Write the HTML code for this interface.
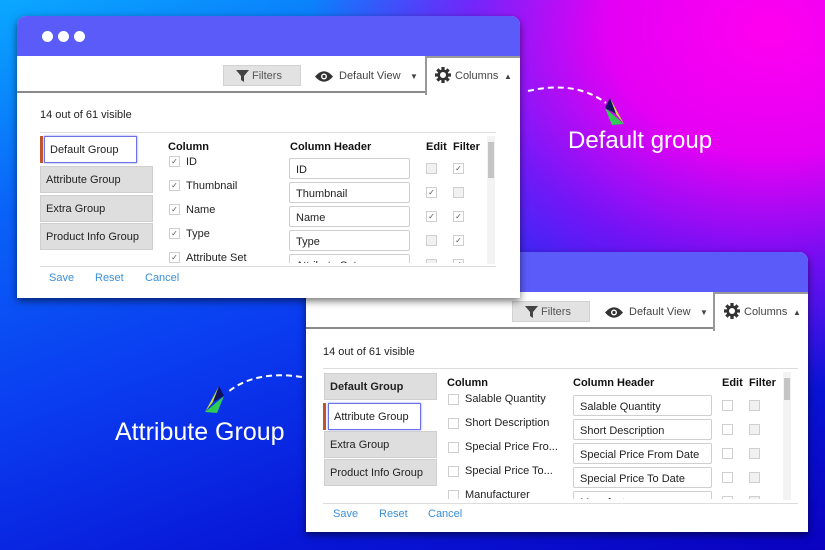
<!DOCTYPE html>
<html><head><meta charset="utf-8"><style>
*{margin:0;padding:0;box-sizing:border-box}
body{width:825px;height:550px;overflow:hidden;position:relative;font-family:"Liberation Sans",sans-serif;
background:
radial-gradient(ellipse 460px 360px at 770px 30px,#ff00f0 0%,#e400f4 35%,rgba(170,0,250,.65) 65%,rgba(120,0,255,0) 100%),
linear-gradient(160deg,#0aa8ff 0%,#0a62f8 25%,#0a3cf0 50%,#0818d8 75%,#0a02c0 100%);}
.abs{position:absolute}
.win{position:absolute;background:#fff;border-radius:9px 9px 0 0;box-shadow:0 3px 8px rgba(0,0,0,.55);overflow:hidden}
.hdr{position:absolute;left:0;top:0;right:0;height:40px;background:#5b5bfa}
.dot{position:absolute;top:15px;width:11px;height:11px;border-radius:50%;background:#fff}
.tb{position:absolute;left:0;right:0;top:40px;height:37px;background:#fff;border-bottom:2px solid #8a8a8a}
.tab{position:absolute;top:40px;right:0;height:39px;background:#fff;border-left:2px solid #999;border-top:2px solid #999}
.btn{position:absolute;height:21px;background:#e2e2e2;border:1px solid #d2d2d2;font-size:11px;color:#555;line-height:20px}
.t{position:absolute;font-size:11px;line-height:16px;color:#222;white-space:nowrap}
.b{font-weight:bold;color:#111}
.grp{position:absolute;height:27px;background:#dedede;border:1px solid #cfcfcf;font-size:11px;color:#222;line-height:26px;padding-left:5px;white-space:nowrap}
.sel{background:#fff;border:1px solid #6b72e6;box-shadow:0 0 2px #8a8ff0}
.bar{position:absolute;width:3px;background:#c0532a}
.cb{position:absolute;width:11px;height:11px;border:1px solid #cfcfcf;background:#fff;font-size:8px;line-height:9px;text-align:center;color:#555}
.cbf{background:#f1f1f1}
.inp{position:absolute;height:21px;border:1px solid #cfcfcf;border-radius:2px;font-size:11px;line-height:20px;padding-left:6px;padding-top:1px;color:#222;background:#fff;white-space:nowrap;overflow:hidden}
.clip{position:absolute;overflow:hidden}
.lnk{position:absolute;font-size:11px;line-height:16px;color:#3a8fd9}
.ann{position:absolute;color:#fff;font-size:24px;white-space:nowrap}
</style></head><body>

<svg class="abs" style="left:0;top:0" width="825" height="550">
<path d="M528 91 Q575 80 606 103" fill="none" stroke="#fff" stroke-width="2" stroke-dasharray="6 4"/>
<path d="M302 377 Q255 370 228 392" fill="none" stroke="#fff" stroke-width="2" stroke-dasharray="6 4"/>
<g transform="translate(614,112)"><path d="M-9 -4 L10 12 L-2 13 Z" fill="#2ecc55"/><path d="M-4 -14 L10 12 L2 2 Z" fill="#c7dc3a"/><path d="M-9 -4 L2 2 L-4 -14 Z" fill="#101060"/></g>
<g transform="translate(215,400) scale(-1,1)"><path d="M-9 -4 L10 12 L-2 13 Z" fill="#2ecc55"/><path d="M-4 -14 L10 12 L2 2 Z" fill="#c7dc3a"/><path d="M-9 -4 L2 2 L-4 -14 Z" fill="#101060"/></g>
</svg>
<div class="ann" style="left:568px;top:127px">Default group</div>
<div class="ann" style="left:115px;top:418px;font-size:25px">Attribute Group</div>

<!-- Window 2 -->
<div class="win" style="left:306px;top:252px;width:502px;height:280px">
<div class="hdr"></div>
<div class="tb"></div>
<div class="btn" style="left:206px;top:49px;width:78px;padding-left:28px"><svg class="abs" style="left:12px;top:4px" width="13" height="12"><path d="M0 0H13L8 6V12L5 10V6Z" fill="#444"/></svg>Filters</div>
<svg class="abs" style="left:299px;top:55px" width="18" height="11"><path d="M0 5.5Q9 -5 18 5.5Q9 16 0 5.5Z" fill="#333"/><circle cx="9" cy="5.5" r="3" fill="#fff"/><circle cx="9" cy="5.5" r="1.6" fill="#333"/></svg>
<div class="t" style="left:323px;top:52px;color:#444">Default View</div>
<div class="t" style="left:394px;top:53px;font-size:8px;color:#444">▼</div>
<div class="tab" style="left:407px"></div>
<svg class="abs" style="left:418px;top:51px" width="16" height="16" viewBox="-8 -8 16 16"><g fill="#333"><circle r="5.5"/><rect x="-1.6" y="-8" width="3.2" height="16"/><rect x="-1.6" y="-8" width="3.2" height="16" transform="rotate(45)"/><rect x="-1.6" y="-8" width="3.2" height="16" transform="rotate(90)"/><rect x="-1.6" y="-8" width="3.2" height="16" transform="rotate(135)"/></g><circle r="3" fill="#fff"/></svg>
<div class="t" style="left:438px;top:52px;color:#444">Columns</div>
<div class="t" style="left:487px;top:53px;font-size:8px;color:#444">▲</div>
<div class="t" style="left:17px;top:92px">14 out of 61 visible</div>
<div class="abs" style="left:17px;top:116px;width:475px;height:1px;background:#ddd"></div>
<div class="grp" style="left:18px;top:121px;width:113px" ><b style="font-weight:bold">Default Group</b></div>
<div class="bar" style="left:17px;top:151px;height:27px"></div>
<div class="grp sel" style="left:22px;top:151px;width:93px">Attribute Group</div>
<div class="grp" style="left:18px;top:179px;width:113px">Extra Group</div>
<div class="grp" style="left:18px;top:207px;width:113px">Product Info Group</div>
<div class="clip" style="left:130px;top:118px;width:350px;height:129px">
<div class="t b" style="left:11px;top:5px">Column</div>
<div class="t b" style="left:137px;top:5px">Column Header</div>
<div class="t b" style="left:286px;top:5px">Edit</div>
<div class="t b" style="left:313px;top:5px">Filter</div>
<div class="cb" style="left:12px;top:24px"></div><div class="t" style="left:29px;top:21px">Salable Quantity</div>
<div class="cb" style="left:12px;top:48px"></div><div class="t" style="left:29px;top:45px">Short Description</div>
<div class="cb" style="left:12px;top:72px"></div><div class="t" style="left:29px;top:69px">Special Price Fro...</div>
<div class="cb" style="left:12px;top:96px"></div><div class="t" style="left:29px;top:93px">Special Price To...</div>
<div class="cb" style="left:12px;top:120px"></div><div class="t" style="left:29px;top:117px">Manufacturer</div>
<div class="inp" style="left:137px;top:25px;width:139px">Salable Quantity</div>
<div class="inp" style="left:137px;top:49px;width:139px">Short Description</div>
<div class="inp" style="left:137px;top:73px;width:139px">Special Price From Date</div>
<div class="inp" style="left:137px;top:97px;width:139px">Special Price To Date</div>
<div class="inp" style="left:137px;top:121px;width:139px">Manufacturer</div>
<div class="cb" style="left:286px;top:30px"></div><div class="cb cbf" style="left:313px;top:30px"></div>
<div class="cb" style="left:286px;top:54px"></div><div class="cb cbf" style="left:313px;top:54px"></div>
<div class="cb" style="left:286px;top:78px"></div><div class="cb cbf" style="left:313px;top:78px"></div>
<div class="cb" style="left:286px;top:102px"></div><div class="cb cbf" style="left:313px;top:102px"></div>
<div class="cb" style="left:286px;top:126px"></div><div class="cb cbf" style="left:313px;top:126px"></div>
</div>
<div class="abs" style="left:477px;top:120px;width:8px;height:128px;background:#f3f3f3"></div>
<div class="abs" style="left:478px;top:126px;width:6px;height:22px;background:#c4c4c4"></div>
<div class="abs" style="left:17px;top:251px;width:475px;height:1px;background:#ddd"></div>
<div class="lnk" style="left:27px;top:254px">Save</div>
<div class="lnk" style="left:73px;top:254px">Reset</div>
<div class="lnk" style="left:122px;top:254px">Cancel</div>
</div>

<!-- Window 1 -->
<div class="win" style="left:17px;top:16px;width:503px;height:282px">
<div class="hdr"></div>
<div class="dot" style="left:25px"></div><div class="dot" style="left:41px"></div><div class="dot" style="left:57px"></div>
<div class="tb"></div>
<div class="btn" style="left:206px;top:49px;width:78px;padding-left:28px"><svg class="abs" style="left:12px;top:4px" width="13" height="12"><path d="M0 0H13L8 6V12L5 10V6Z" fill="#444"/></svg>Filters</div>
<svg class="abs" style="left:298px;top:55px" width="18" height="11"><path d="M0 5.5Q9 -5 18 5.5Q9 16 0 5.5Z" fill="#333"/><circle cx="9" cy="5.5" r="3" fill="#fff"/><circle cx="9" cy="5.5" r="1.6" fill="#333"/></svg>
<div class="t" style="left:322px;top:52px;color:#444">Default View</div>
<div class="t" style="left:393px;top:53px;font-size:8px;color:#444">▼</div>
<div class="tab" style="left:408px"></div>
<svg class="abs" style="left:418px;top:51px" width="16" height="16" viewBox="-8 -8 16 16"><g fill="#333"><circle r="5.5"/><rect x="-1.6" y="-8" width="3.2" height="16"/><rect x="-1.6" y="-8" width="3.2" height="16" transform="rotate(45)"/><rect x="-1.6" y="-8" width="3.2" height="16" transform="rotate(90)"/><rect x="-1.6" y="-8" width="3.2" height="16" transform="rotate(135)"/></g><circle r="3" fill="#fff"/></svg>
<div class="t" style="left:438px;top:52px;color:#444">Columns</div>
<div class="t" style="left:487px;top:53px;font-size:8px;color:#444">▲</div>
<div class="t" style="left:23px;top:91px">14 out of 61 visible</div>
<div class="abs" style="left:23px;top:116px;width:456px;height:1px;background:#ddd"></div>
<div class="bar" style="left:23px;top:120px;height:27px"></div>
<div class="grp sel" style="left:27px;top:120px;width:93px">Default Group</div>
<div class="grp" style="left:23px;top:150px;width:113px">Attribute Group</div>
<div class="grp" style="left:23px;top:179px;width:113px">Extra Group</div>
<div class="grp" style="left:23px;top:207px;width:113px">Product Info Group</div>
<div class="clip" style="left:140px;top:118px;width:330px;height:129px">
<div class="t b" style="left:11px;top:5px">Column</div>
<div class="t b" style="left:133px;top:5px">Column Header</div>
<div class="t b" style="left:269px;top:5px">Edit</div>
<div class="t b" style="left:296px;top:5px">Filter</div>
<div class="cb" style="left:12px;top:22px">✓</div><div class="t" style="left:29px;top:20px">ID</div>
<div class="cb" style="left:12px;top:46px">✓</div><div class="t" style="left:29px;top:44px">Thumbnail</div>
<div class="cb" style="left:12px;top:70px">✓</div><div class="t" style="left:29px;top:68px">Name</div>
<div class="cb" style="left:12px;top:94px">✓</div><div class="t" style="left:29px;top:92px">Type</div>
<div class="cb" style="left:12px;top:118px">✓</div><div class="t" style="left:29px;top:116px">Attribute Set</div>
<div class="inp" style="left:132px;top:24px;width:121px">ID</div>
<div class="inp" style="left:132px;top:48px;width:121px">Thumbnail</div>
<div class="inp" style="left:132px;top:72px;width:121px">Name</div>
<div class="inp" style="left:132px;top:96px;width:121px">Type</div>
<div class="inp" style="left:132px;top:120px;width:121px">Attribute Set</div>
<div class="cb cbf" style="left:269px;top:29px"></div><div class="cb" style="left:296px;top:29px">✓</div>
<div class="cb" style="left:269px;top:53px">✓</div><div class="cb cbf" style="left:296px;top:53px"></div>
<div class="cb" style="left:269px;top:77px">✓</div><div class="cb" style="left:296px;top:77px">✓</div>
<div class="cb cbf" style="left:269px;top:101px"></div><div class="cb" style="left:296px;top:101px">✓</div>
<div class="cb cbf" style="left:269px;top:125px"></div><div class="cb" style="left:296px;top:125px">✓</div>
</div>
<div class="abs" style="left:470px;top:120px;width:8px;height:128px;background:#f3f3f3"></div>
<div class="abs" style="left:471px;top:126px;width:6px;height:36px;background:#c4c4c4"></div>
<div class="abs" style="left:23px;top:250px;width:456px;height:1px;background:#ddd"></div>
<div class="lnk" style="left:32px;top:254px">Save</div>
<div class="lnk" style="left:78px;top:254px">Reset</div>
<div class="lnk" style="left:128px;top:254px">Cancel</div>
</div>

</body></html>
